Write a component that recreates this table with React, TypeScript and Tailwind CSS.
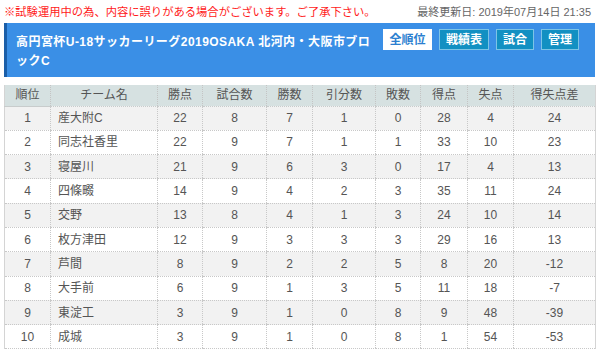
import React from "react";

const rows: [number, string, number, number, number, number, number, number, number, number][] = [
  [1, "産大附C", 22, 8, 7, 1, 0, 28, 4, 24],
  [2, "同志社香里", 22, 9, 7, 1, 1, 33, 10, 23],
  [3, "寝屋川", 21, 9, 6, 3, 0, 17, 4, 13],
  [4, "四條畷", 14, 9, 4, 2, 3, 35, 11, 24],
  [5, "交野", 13, 8, 4, 1, 3, 24, 10, 14],
  [6, "枚方津田", 12, 9, 3, 3, 3, 29, 16, 13],
  [7, "芦間", 8, 9, 2, 2, 5, 8, 20, -12],
  [8, "大手前", 6, 9, 1, 3, 5, 11, 18, -7],
  [9, "東淀工", 3, 9, 1, 0, 8, 9, 48, -39],
  [10, "成城", 3, 9, 1, 0, 8, 1, 54, -53],
];

const headers = ["順位", "チーム名", "勝点", "試合数", "勝数", "引分数", "敗数", "得点", "失点", "得失点差"];
const widths = [46, 107, 45, 64, 46, 63, 45, 47, 46, 82];

export default function App() {
  return (
    <div
      className="w-[600px] h-[356px] bg-white overflow-hidden text-[12px] text-[#555]"
      style={{ fontFamily: '"Liberation Sans", "Noto Sans CJK JP", sans-serif' }}
    >
      <div className="flex items-center justify-between pl-[4px] pr-[9px] h-[23px] pt-[2px]">
        <span className="text-[#ff1a1a] text-[11.3px]">※試験運用中の為、内容に誤りがある場合がございます。ご了承下さい。</span>
        <span className="text-[#666] text-[11px]">最終更新日: 2019年07月14日 21:35</span>
      </div>
      <div className="mx-[4px] w-[591px] h-[54px] bg-[#3a8fe6] border-l-[3px] border-[#1b5ea8] flex items-start">
        <div className="w-[358px] shrink-0 ml-[9px] pt-[10px] text-white font-bold text-[12px] leading-[19px] tracking-[0.45px]">
          高円宮杯U-18サッカーリーグ2019OSAKA 北河内・大阪市ブロックC
        </div>
        <div className="ml-[9px] mt-[6px] flex gap-[7px]">
          <div className="w-[49px] h-[21px] bg-white text-[#2c7fd0] font-bold flex items-center justify-center">全順位</div>
          <div className="w-[50px] h-[21px] bg-[#1290c2] border border-[#7cc4e6] text-white font-bold flex items-center justify-center">戦績表</div>
          <div className="w-[38px] h-[21px] bg-[#1290c2] border border-[#7cc4e6] text-white font-bold flex items-center justify-center">試合</div>
          <div className="w-[38px] h-[21px] bg-[#1290c2] border border-[#7cc4e6] text-white font-bold flex items-center justify-center">管理</div>
        </div>
      </div>
      <div className="mx-[4px] mt-[8px] w-[591px]">
        <table className="w-[591px] table-fixed border-collapse border-x border-[#d4d4d4]">
          <colgroup>
            {widths.map((w, i) => (
              <col key={i} style={{ width: w }} />
            ))}
          </colgroup>
          <thead>
            <tr className="h-[21px] bg-[#d6e1e1]">
              {headers.map((h, i) => (
                <th
                  key={i}
                  className={`font-normal text-center p-0 border-b border-[#c8cccc] ${i > 0 ? "border-l border-dotted border-l-[#c4c4c4]" : ""}`}
                >
                  {h}
                </th>
              ))}
            </tr>
          </thead>
          <tbody>
            {rows.map((r, ri) => (
              <tr key={ri} className={`h-[24.3px] ${ri % 2 === 0 ? "bg-[#f2f2f2]" : "bg-white"}`}>
                {r.map((c, ci) => (
                  <td
                    key={ci}
                    className={`p-0 border-b border-dotted border-[#c8c8c8] ${ci > 0 ? "border-l" : ""} ${ci === 1 ? "text-left pl-[7px]" : "text-center"}`}
                  >
                    {c}
                  </td>
                ))}
              </tr>
            ))}
          </tbody>
        </table>
      </div>
    </div>
  );
}
